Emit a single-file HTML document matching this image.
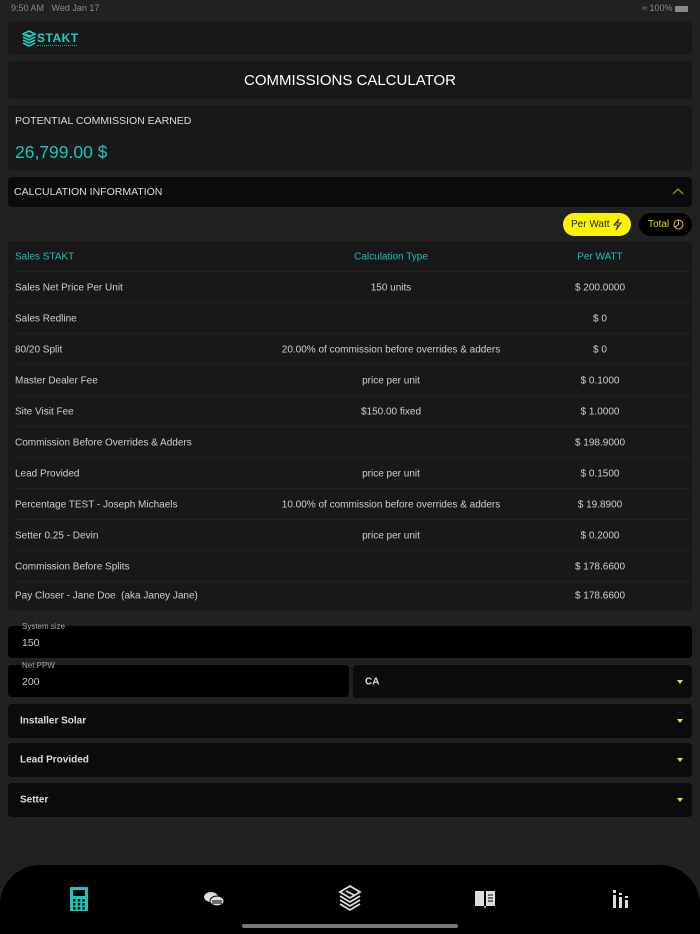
<!DOCTYPE html>
<html><head><meta charset="utf-8"><style>
*{margin:0;padding:0;box-sizing:border-box}
html,body{width:700px;height:934px;overflow:hidden}
body{background:#212121;font-family:"Liberation Sans",sans-serif;color:#ddd;position:relative}
.abs{position:absolute}
.card{position:absolute;left:8px;width:684px;background:#181818;border-radius:4px}
.status{position:absolute;top:3px;font-size:9px;color:#8a8a8a}
.tbl{position:absolute;left:8px;top:241px;width:684px;height:369px;background:#181818;border-radius:4px;padding:0 0 0 7px}
.row{height:31px;border-bottom:1px solid #222;position:relative;font-size:10px;color:#cfcfcf}
.row span{position:absolute;top:16px;transform:translateY(-50%);white-space:nowrap}
.c1{left:0}.c2{left:376px;transform:translate(-50%,-50%)!important}.c3{left:585px;transform:translate(-50%,-50%)!important}
.hd{color:#14c2b5}
.field{position:absolute;background:#000;border-radius:4px}
.sel{position:absolute;background:#0b0b0b;border-radius:4px;font-size:10px;font-weight:bold;color:#ddd}
.sel b{position:absolute;left:12px;top:50%;transform:translateY(-50%)}
.sel i{position:absolute;right:9px;top:50%;margin-top:-2px;border-left:3px solid transparent;border-right:3px solid transparent;border-top:4px solid #f2e01a}
</style></head><body>
<div class="status" style="left:11px">9:50 AM &nbsp; Wed Jan 17</div>
<div class="status" style="right:12px">&#8776; 100% <span style="display:inline-block;width:13px;height:6px;background:#888;border-radius:1px;vertical-align:middle"></span></div>

<div class="card" style="top:22px;height:33px">
<svg class="abs" style="left:14px;top:8px" width="14" height="17" viewBox="0 0 14 17"><path d="M7 1L13 4 7 7 1 4Z M1 7l6 3 6-3 M1 10l6 3 6-3 M1 13l6 3 6-3 M4 4.5l5 2" fill="none" stroke="#19d3c5" stroke-width="1.6"/></svg>
<div class="abs" style="left:29px;top:9px;font-size:12px;font-weight:bold;color:#19d3c5;letter-spacing:0.5px">STAKT</div>
<div class="abs" style="left:29px;top:23px;width:40px;height:1px;border-top:1px dotted #19a89e"></div>
</div>

<div class="card" style="top:61px;height:38px"><div class="abs" style="left:0;right:0;top:11px;text-align:center;font-size:15px;color:#fff">COMMISSIONS CALCULATOR</div></div>

<div class="card" style="top:105px;height:65px">
<div class="abs" style="left:7px;top:10px;font-size:10.5px;color:#ddd">POTENTIAL COMMISSION EARNED</div>
<div class="abs" style="left:7px;top:37px;font-size:17.5px;color:#14c9bb">26,799.00 $</div>
</div>

<div class="card" style="top:177px;height:30px;background:#0b0b0b">
<div class="abs" style="left:6px;top:9px;font-size:10.5px;color:#ddd">CALCULATION INFORMATION</div>
<svg class="abs" style="right:8px;top:10px" width="12" height="8"><path d="M1 7L6 2 11 7" fill="none" stroke="#9a9020" stroke-width="1.3"/></svg>
</div>

<div class="abs" style="left:563px;top:213px;width:68px;height:23px;background:#fff200;border-radius:12px;color:#222;font-size:10px;padding:6px 0 0 8px">Per Watt <svg style="position:absolute;right:9px;top:5px" width="9" height="13"><path d="M6 1L1 7h4l-2 5 5-7H4z" fill="none" stroke="#333" stroke-width="1"/></svg></div>
<div class="abs" style="left:639px;top:213px;width:53px;height:23px;background:#000;border-radius:12px;color:#e8d800;font-size:10px;padding:6px 0 0 9px">Total <svg style="position:absolute;right:8px;top:6px" width="11" height="11"><circle cx="5.5" cy="5.5" r="4.5" fill="none" stroke="#e8d800"/><path d="M5.5 1v4.5L2 8" fill="none" stroke="#e8d800"/></svg></div>

<div class="tbl">
<div class="row"><span class="c1 hd">Sales STAKT</span><span class="c2 hd">Calculation Type</span><span class="c3 hd">Per WATT</span></div>
<div class="row"><span class="c1">Sales Net Price Per Unit</span><span class="c2">150 units</span><span class="c3">$ 200.0000</span></div>
<div class="row"><span class="c1">Sales Redline</span><span class="c3">$ 0</span></div>
<div class="row"><span class="c1">80/20 Split</span><span class="c2">20.00% of commission before overrides &amp; adders</span><span class="c3">$ 0</span></div>
<div class="row"><span class="c1">Master Dealer Fee</span><span class="c2">price per unit</span><span class="c3">$ 0.1000</span></div>
<div class="row"><span class="c1">Site Visit Fee</span><span class="c2">$150.00 fixed</span><span class="c3">$ 1.0000</span></div>
<div class="row"><span class="c1">Commission Before Overrides &amp; Adders</span><span class="c3">$ 198.9000</span></div>
<div class="row"><span class="c1">Lead Provided</span><span class="c2">price per unit</span><span class="c3">$ 0.1500</span></div>
<div class="row"><span class="c1">Percentage TEST - Joseph Michaels</span><span class="c2">10.00% of commission before overrides &amp; adders</span><span class="c3">$ 19.8900</span></div>
<div class="row"><span class="c1">Setter 0.25 - Devin</span><span class="c2">price per unit</span><span class="c3">$ 0.2000</span></div>
<div class="row"><span class="c1">Commission Before Splits</span><span class="c3">$ 178.6600</span></div>
<div class="row" style="border:none"><span class="c1" style="top:14px">Pay Closer - Jane Doe &nbsp;(aka Janey Jane)</span><span class="c3" style="top:14px">$ 178.6600</span></div>
</div>

<div class="field" style="left:8px;top:626px;width:684px;height:32px"></div>
<div class="abs" style="left:22px;top:622px;font-size:8px;color:#aaa">System size</div>
<div class="abs" style="left:22px;top:637px;font-size:10.5px;color:#ccc">150</div>
<div class="field" style="left:8px;top:665px;width:341px;height:32px"></div>
<div class="abs" style="left:22px;top:661px;font-size:8px;color:#aaa">Net PPW</div>
<div class="abs" style="left:22px;top:676px;font-size:10.5px;color:#ccc">200</div>
<div class="sel" style="left:353px;top:665px;width:339px;height:33px"><b style="left:12px">CA</b><i></i></div>
<div class="sel" style="left:8px;top:704px;width:684px;height:34px"><b>Installer Solar</b><i></i></div>
<div class="sel" style="left:8px;top:743px;width:684px;height:34px"><b>Lead Provided</b><i></i></div>
<div class="sel" style="left:8px;top:783px;width:684px;height:34px"><b>Setter</b><i></i></div>

<div class="abs" style="left:0;top:865px;width:700px;height:69px;background:#000;border-radius:40px 40px 0 0"></div>
<svg class="abs" style="left:70px;top:887px" width="18" height="24"><rect x="0" y="0" width="18" height="24" rx="1" fill="#14c9bb"/><rect x="3" y="3" width="12" height="6" fill="#000"/><g fill="#000"><rect x="3" y="12" width="2.5" height="2.5"/><rect x="7.7" y="12" width="2.5" height="2.5"/><rect x="12.4" y="12" width="2.5" height="2.5"/><rect x="3" y="16" width="2.5" height="2.5"/><rect x="7.7" y="16" width="2.5" height="2.5"/><rect x="12.4" y="16" width="2.5" height="2.5"/><rect x="3" y="20" width="2.5" height="2.5"/><rect x="7.7" y="20" width="2.5" height="2.5"/><rect x="12.4" y="20" width="2.5" height="2.5"/></g></svg>
<svg class="abs" style="left:203px;top:890px" width="22" height="18"><ellipse cx="8" cy="7" rx="7" ry="5" fill="#ddd"/><ellipse cx="14" cy="11" rx="7" ry="5" fill="#ddd" stroke="#000"/><path d="M9 11h10M9 13h10" stroke="#000"/></svg>
<svg class="abs" style="left:338px;top:884px" width="24" height="28"><path d="M12 2L22 8 12 14 2 8Z M2 12l10 6 10-6 M2 16l10 6 10-6 M2 20l10 6 10-6 M8 7l8 4" fill="none" stroke="#ddd" stroke-width="1.8"/></svg>
<svg class="abs" style="left:474px;top:890px" width="22" height="20"><path d="M1 1h9v15H1z M12 1h9v15h-9z" fill="#ddd"/><path d="M14 5h5M14 8h5M14 11h5" stroke="#000"/><path d="M10 16l1 3 1-3" fill="#ddd"/></svg>
<svg class="abs" style="left:612px;top:890px" width="18" height="18"><rect x="1" y="0" width="3" height="3" fill="#ddd"/><rect x="1" y="5" width="3" height="13" fill="#ddd"/><rect x="7" y="7" width="3" height="11" fill="#ddd"/><rect x="7" y="3" width="3" height="2" fill="#ddd"/><rect x="13" y="10" width="3" height="8" fill="#ddd"/><rect x="13" y="6" width="3" height="2" fill="#ddd"/></svg>
<div class="abs" style="left:242px;top:924px;width:216px;height:4px;background:#777;border-radius:2px"></div>
</body></html>
